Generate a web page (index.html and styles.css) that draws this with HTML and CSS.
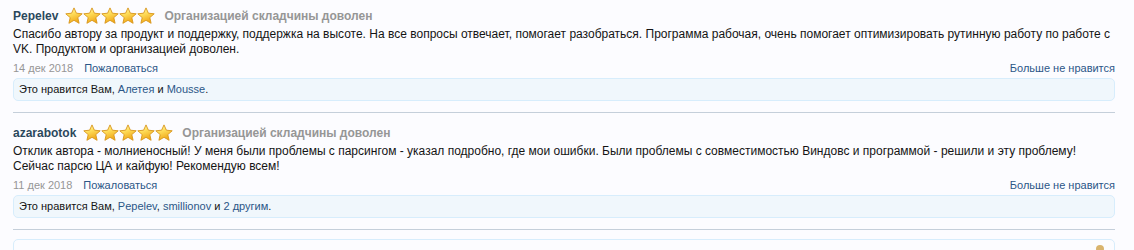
FILE: index.html
```html
<!DOCTYPE html>
<html>
<head>
    <title>Отзывы</title>
    <link rel="stylesheet" href="styles.css">
</head>
<body>
    <svg width="0" height="0" class="defs">
        <defs>
            <linearGradient id="star-fill" x1="0" y1="0" x2="0.4" y2="1">
                <stop offset="0" stop-color="#fffbd6"/>
                <stop offset="0.45" stop-color="#ffdf5c"/>
                <stop offset="1" stop-color="#f0a91a"/>
            </linearGradient>
            <symbol id="star" viewBox="0 0 18 18">
                <path d="M9 0.9l2.4 5.3 5.8.6-4.4 3.8 1.3 5.7L9 13.3l-5.1 3 1.3-5.7L0.8 6.8l5.8-.6z"
                      fill="url(#star-fill)" stroke="#d8951a" stroke-width="0.9" stroke-linejoin="round"/>
            </symbol>
        </defs>
    </svg>

    <div class="reviews">
        <div class="review">
            <div class="review-head">
                <a class="username" href="#">Pepelev</a>
                <span class="stars">
                    <svg><use href="#star"/></svg><svg><use href="#star"/></svg><svg><use href="#star"/></svg><svg><use href="#star"/></svg><svg><use href="#star"/></svg>
                </span>
                <span class="verdict">Организацией складчины доволен</span>
            </div>
            <div class="review-text">
                Спасибо автору за продукт и поддержку, поддержка на высоте. На все вопросы отвечает, помогает разобраться. Программа рабочая, очень помогает оптимизировать рутинную работу по работе с VK. Продуктом и организацией доволен.
            </div>
            <div class="review-meta">
                <span class="date">14 дек 2018</span>
                <a href="#">Пожаловаться</a>
                <a class="unlike" href="#">Больше не нравится</a>
            </div>
            <div class="likes">
                Это нравится Вам, <a href="#">Алетея</a> и <a href="#">Mousse</a>.
            </div>
        </div>

        <div class="review">
            <div class="review-head">
                <a class="username" href="#">azarabotok</a>
                <span class="stars">
                    <svg><use href="#star"/></svg><svg><use href="#star"/></svg><svg><use href="#star"/></svg><svg><use href="#star"/></svg><svg><use href="#star"/></svg>
                </span>
                <span class="verdict">Организацией складчины доволен</span>
            </div>
            <div class="review-text">
                Отклик автора - молниеносный! У меня были проблемы с парсингом - указал подробно, где мои ошибки. Были проблемы с совместимостью Виндовс и программой - решили и эту проблему! Сейчас парсю ЦА и кайфую! Рекомендую всем!
            </div>
            <div class="review-meta">
                <span class="date">11 дек 2018</span>
                <a href="#">Пожаловаться</a>
                <a class="unlike" href="#">Больше не нравится</a>
            </div>
            <div class="likes">
                Это нравится Вам, <a href="#">Pepelev</a>, <a href="#">smillionov</a> и <a href="#">2 другим</a>.
            </div>
        </div>

        <div class="reply-box">
            <span class="avatar-dot"></span>
        </div>
    </div>
</body>
</html>
```

FILE: styles.css
```css
body {
    margin: 0;
    background-color: #fcfcff;
    font-family: "Liberation Sans", Arial, sans-serif;
    font-size: 12px;
    color: #141414;
    overflow: hidden;
}
a {
    color: #2b5687;
    text-decoration: none;
}
.defs {
    position: absolute;
}
.reviews {
    width: 1102px;
    padding: 5px 0 0 13px;
}
.review {
    border-bottom: 1px solid #c5cfda;
    padding-bottom: 11px;
    margin-bottom: 9px;
}
.review-head {
    display: flex;
    align-items: center;
    height: 22px;
}
.username {
    font-weight: bold;
    font-size: 12px;
    color: #2b485c;
}
.stars {
    display: flex;
    margin: 0 9px 0 7px;
}
.stars svg {
    width: 18px;
    height: 18px;
}
.verdict {
    font-weight: bold;
    color: #969696;
}
.review-text {
    line-height: 15px;
}
.review-meta {
    display: flex;
    gap: 11px;
    margin-top: 4px;
    font-size: 11px;
    line-height: 15px;
}
.date {
    color: #969696;
}
.unlike {
    margin-left: auto;
}
.likes {
    margin-top: 2px;
    padding: 4px 5px;
    font-size: 11px;
    line-height: 13px;
    background-color: #f0f7fc;
    border: 1px solid #d7edfc;
    border-radius: 5px;
}
.reply-box {
    position: relative;
    margin-top: 1px;
    height: 40px;
    border: 1px solid #d7edfc;
    border-radius: 5px;
}
.avatar-dot {
    position: absolute;
    right: 10px;
    top: 5px;
    width: 8px;
    height: 8px;
    border-radius: 50%;
    background-color: #d9b46e;
}
```
